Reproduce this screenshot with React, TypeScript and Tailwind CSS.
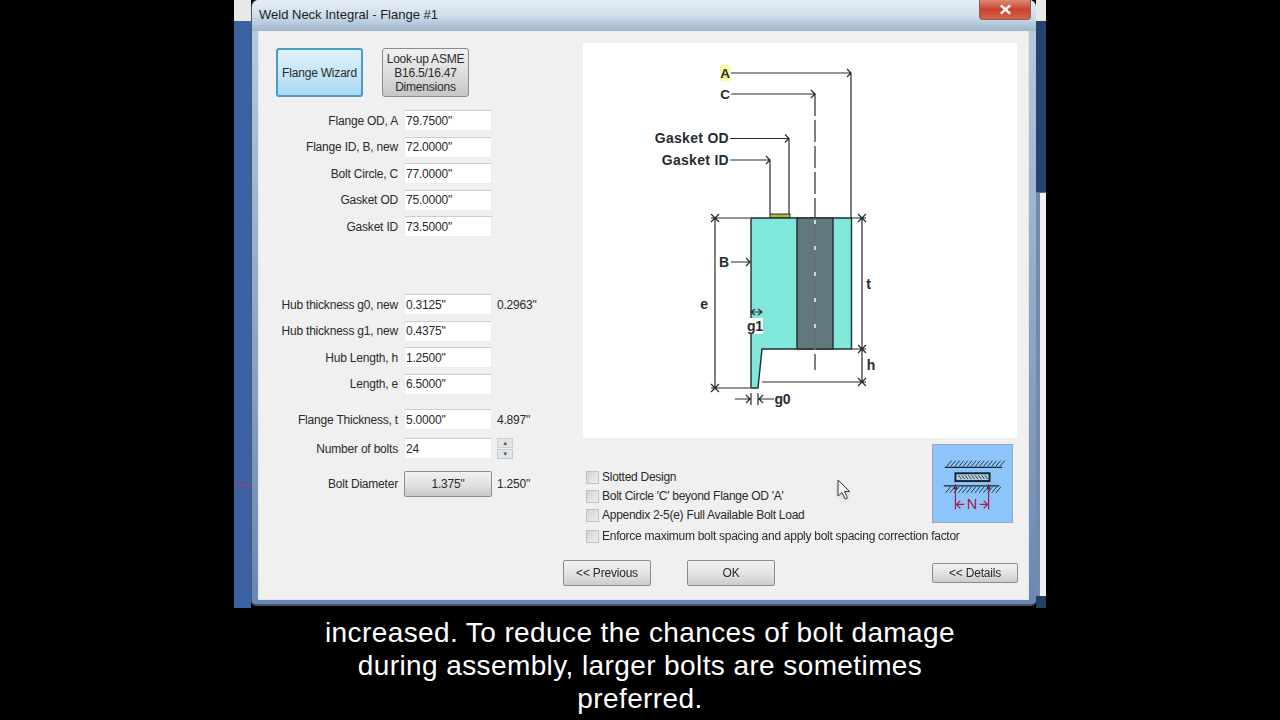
const topFields = [
  ['Flange OD, A', '79.7500"'],
  ['Flange ID, B, new', '72.0000"'],
  ['Bolt Circle, C', '77.0000"'],
  ['Gasket OD', '75.0000"'],
  ['Gasket ID', '73.5000"'],
];

const hubFields = [
  ['Hub thickness g0, new', '0.3125"', '0.2963"'],
  ['Hub thickness g1, new', '0.4375"', ''],
  ['Hub Length, h', '1.2500"', ''],
  ['Length, e', '6.5000"', ''],
];

const checks = ['Slotted Design', "Bolt Circle 'C' beyond Flange OD 'A'", 'Appendix 2-5(e) Full Available Bolt Load'];

function Field({ label, value, extra }: { label: string; value: string; extra?: string }) {
  return (
    <div className="flex h-[26.4px] items-center">
      <span className="w-[140px] text-right">{label}</span>
      <span className="ml-[6px] flex h-[21px] w-[88px] items-center border border-[#ececec] border-t-[#cdcdcd] bg-white pl-[1px]">{value}</span>
      {extra && <span className="ml-[5px]">{extra}</span>}
    </div>
  );
}

function Check({ label }: { label: string }) {
  return (
    <div className="flex h-[19px] items-center gap-[3px] tracking-[-0.27px]">
      <span className="h-[13px] w-[13px] border border-[#c2c2c2] bg-gradient-to-br from-[#d2d2d2] to-[#efefef]" />
      <span>{label}</span>
    </div>
  );
}

function Diagram() {
  const line = '#262c30';
  return (
    <svg viewBox="583 43 434 395" className="h-[395px] w-[434px] bg-white">
      {/* gasket + flange body */}
      <rect x="770" y="214" width="20" height="4" fill="#b4b43c" stroke={line} strokeWidth="1" />
      <path d="M751 218H851.5V349H762L758 388H751Z" fill="#80e8da" stroke={line} strokeWidth="1.4" />
      <rect x="797" y="218" width="36" height="131" fill="#62787f" stroke={line} strokeWidth="1.4" />
      <path d="M815 218V352" stroke="white" strokeWidth="1.4" />

      {/* leaders */}
      <g fill="none" stroke={line} strokeWidth="1.2">
        <path d="M731 73H851V218M847 69L851 73L847 77" />
        <path d="M731 94H815M811 90L815 94L811 98" />
        <path d="M730 138.500H789V214M785 134.500L789 138.500L785 142.500" />
        <path d="M730 160H770V214M766 156L770 160L766 164" />
        <path d="M815 94V370" strokeDasharray="22 4" />
        {/* e */}
        <path d="M750 218H711M715 218V388M711 388H750M711 214L719 222M719 214L711 222M711 384L719 392M719 384L711 392" />
        {/* t, h */}
        <path d="M852 218H866M862 218V382M852 349H866M762 382H866M858 214L866 222M866 214L858 222M858 345L866 353M866 345L858 353M858 378L866 386M866 378L858 386" />
        {/* B */}
        <path d="M731 262H750M746 258L750 262L746 266" />
        {/* g1 */}
        <path d="M751 312H762M755 309L751 312L755 315M758 309L762 312L758 315" />
        {/* g0 */}
        <path d="M735 399H750M746 395L750 399L746 403M751 393V405M758 393V405M759 399H774M763 395L759 399L763 403" />
      </g>

      <rect x="720" y="65" width="10.500" height="16" fill="#fafa9e" />
      <rect x="747" y="318" width="16" height="16" fill="white" />
      <g fontFamily='"Liberation Sans", Arial, sans-serif' fontWeight="700" fontSize="14" fill="#262c30">
        <text x="725" y="78" textAnchor="middle" fontSize="13.500">A</text>
        <text x="725" y="99" textAnchor="middle" fontSize="13.500">C</text>
        <text x="729" y="143" textAnchor="end" letterSpacing=".3">Gasket OD</text>
        <text x="729" y="165" textAnchor="end" letterSpacing=".3">Gasket ID</text>
        <text x="724" y="266.500" textAnchor="middle">B</text>
        <text x="704" y="309" textAnchor="middle">e</text>
        <text x="868.500" y="289" textAnchor="middle">t</text>
        <text x="871" y="370" textAnchor="middle">h</text>
        <text x="755" y="331" textAnchor="middle">g1</text>
        <text x="782.500" y="404" textAnchor="middle">g0</text>
      </g>
    </svg>
  );
}

function BoltThumb() {
  const top = Array.from({ length: 14 }, (_, i) => 946 + i * 4.2);
  const mid = Array.from({ length: 9 }, (_, i) => 958 + i * 3.4);
  const low = Array.from({ length: 13 }, (_, i) => 945 + i * 4.3);
  return (
    <svg viewBox="932 444 81 79" className="h-[79px] w-[81px] border border-[#9aa7b4] bg-[#8dc5fb]">
      <g stroke="#14242e" fill="none">
        <path d="M944 467H1003" strokeWidth="1.2" />
        {top.map(x => <path key={x} d={`M${x} 466L${x + 5} 460`} strokeWidth=".9" />)}
        <rect x="955" y="473" width="35" height="8" fill="#b9cfe0" strokeWidth="2" />
        {mid.map(x => <path key={x} d={`M${x} 475L${x + 3} 479`} strokeWidth=".9" />)}
        <path d="M943 486H1000" strokeWidth="1.2" />
        {low.map(x => <path key={x} d={`M${x + 5} 487L${x} 493`} strokeWidth=".9" />)}
      </g>
      <circle cx="955" cy="488" r="1.600" fill="#14242e" />
      <circle cx="989" cy="488" r="1.600" fill="#14242e" />
      <g stroke="#a8164a" fill="none" strokeWidth="1.2">
        <path d="M955 484V510M989 484V510" />
        <path d="M956 505H964M960 501L956 505L960 509M980 505H988M984 501L988 505L984 509" />
      </g>
      <text x="972" y="510" textAnchor="middle" fontSize="15" fill="#a8164a" fontFamily='"Liberation Sans", Arial, sans-serif'>N</text>
    </svg>
  );
}

export default function App() {
  return (
    <div className="h-screen w-screen overflow-hidden bg-black font-['Liberation_Sans',Arial,sans-serif]">
      <div className="relative mx-auto flex h-[608px] w-[812px] text-[12px] leading-none tracking-[-0.2px] text-[#2a2a2a] blur-[0.4px]">
        {/* desktop behind the dialog, left */}
        <div className="flex w-[17px] flex-col">
          <div className="h-[21px] bg-[#e8e8e6]" />
          <div className="flex-1 bg-[#3b63a3]" />
        </div>
        <div className="absolute left-[2px] top-[484px] h-[2px] w-[14px] bg-[#8a4a78]" />

        {/* dialog */}
        <div className="flex h-[606px] w-[785px] flex-col rounded-t-[7px] rounded-b-[5px] border-b-2 border-l border-[#47566e] bg-gradient-to-b from-[#bccddd] via-[#93a9c4] to-[#6a88b0]">
          <div className="flex h-[31px] items-start justify-between rounded-t-[7px] bg-gradient-to-b from-[#e4edf5] via-[#cfdfec] to-[#9fb6cc] pl-[7px] pr-[5px]">
            <span className="pt-[8px] text-[13px] tracking-[0px] text-[#1c1c1c]">Weld Neck Integral - Flange #1</span>
            <span className="flex h-[20px] w-[52px] items-center justify-center rounded-b-[4px] border border-t-0 border-[#8d5a58] bg-gradient-to-b from-[#d98a78] via-[#c9402a] to-[#d2644e]">
              <svg viewBox="0 0 14 12" className="h-[11px] w-[13px]"><path d="M2 1.500L12 10.500M12 1.500L2 10.500" stroke="white" strokeWidth="2.800" /></svg>
            </span>
          </div>

          <div className="ml-[6px] mr-[7px] flex flex-1 flex-col border-x border-b border-[#dfe6ee] bg-[#f0f0f0]">
            <div className="flex h-[529px]">
              {/* form */}
              <div className="-ml-[1px] flex w-[325px] flex-col pt-[17px]">
                <div className="flex h-[49px] gap-[19px] pl-[18px]">
                  <button className="h-[49px] w-[87px] rounded-[3px] border-2 border-[#4b9bc4] bg-gradient-to-b from-[#e2f3fc] to-[#a9daf3]">Flange Wizard</button>
                  <button className="h-[49px] w-[87px] rounded-[3px] border border-[#8c8c8c] bg-gradient-to-b from-[#f1f1f1] via-[#dedede] to-[#c6c6c6] leading-[14px]">Look-up ASME<br />B16.5/16.47<br />Dimensions</button>
                </div>
                <div className="mt-[10.800px]">
                  {topFields.map(([l, v]) => <Field key={l} label={l} value={v} />)}
                </div>
                <div className="mt-[52px]">
                  {hubFields.map(([l, v, e]) => <Field key={l} label={l} value={v} extra={e} />)}
                </div>
                <div className="mt-[9.400px]">
                  <Field label="Flange Thickness, t" value={'5.0000"'} extra={'4.897"'} />
                </div>
                <div className="mt-[2.800px] flex h-[26px] items-center">
                  <span className="w-[140px] text-right">Number of bolts</span>
                  <span className="ml-[6px] flex h-[21px] w-[88px] items-center border border-[#ececec] border-t-[#cdcdcd] bg-white pl-[1px]">24</span>
                  <div className="ml-[5px] flex w-[16px] flex-col gap-[1px]">
                    <span className="flex h-[10px] items-center justify-center border border-[#d0d0d0] bg-[#e4e4e4] text-[6px] text-[#555]">▲</span>
                    <span className="flex h-[10px] items-center justify-center border border-[#c4cdd6] bg-[#dfe5ea] text-[6px] text-[#555]">▼</span>
                  </div>
                </div>
                <div className="mt-[9px] flex h-[26px] items-center">
                  <span className="w-[140px] text-right">Bolt Diameter</span>
                  <button className="ml-[6px] h-[26px] w-[88px] rounded-[2px] border border-[#8c8c8c] bg-gradient-to-b from-[#f2f2f2] via-[#e2e2e2] to-[#c9c9c9]">1.375"</button>
                  <span className="ml-[5px]">1.250"</span>
                </div>
              </div>

              {/* drawing + options */}
              <div className="flex w-[434px] flex-col pt-[12px]">
                <Diagram />
                <div className="mt-[6px] flex h-[82.500px] items-start justify-between pl-[3px] pr-[4px]">
                  <div className="flex flex-col pt-[23.500px]">
                    {checks.map(c => <Check key={c} label={c} />)}
                  </div>
                  <BoltThumb />
                </div>
                <div className="pl-[3px]">
                  <Check label="Enforce maximum bolt spacing and apply bolt spacing correction factor" />
                </div>
              </div>
            </div>

            <div className="flex items-start pl-[304px]">
              <button className="h-[26px] w-[88px] rounded-[2px] border border-[#8c8c8c] bg-gradient-to-b from-[#f2f2f2] via-[#e4e4e4] to-[#cccccc]">&lt;&lt; Previous</button>
              <button className="ml-[36px] h-[26px] w-[88px] rounded-[2px] border border-[#8c8c8c] bg-gradient-to-b from-[#f2f2f2] via-[#e4e4e4] to-[#cccccc]">OK</button>
              <button className="ml-[157px] mt-[3px] h-[20px] w-[86px] rounded-[2px] border border-[#8c8c8c] bg-gradient-to-b from-[#f2f2f2] via-[#e4e4e4] to-[#cccccc]">&lt;&lt; Details</button>
            </div>
          </div>
          <div className="h-[4px]" />
        </div>

        {/* desktop behind the dialog, right */}
        <div className="flex w-[10px] flex-col">
          <div className="h-[21px] bg-[#e8e8e6]" />
          <div className="h-[171px] bg-[#25436f]" />
          <div className="flex flex-1 border-t border-[#5a6f90]">
            <div className="w-[4px] bg-[#7489ab]" />
            <div className="flex-1 bg-[#eef0f2]" />
          </div>
          <div className="h-[12px] bg-[#25405f]" />
        </div>

        {/* mouse pointer */}
        <svg viewBox="0 0 16 22" className="absolute left-[602px] top-[479px] h-[22px] w-[16px] drop-shadow-sm">
          <path d="M2 1V17L6 13.500L9 20L11.500 19L8.500 12.500H13.500Z" fill="#f4f4f4" stroke="#3a3a3a" strokeWidth="1" />
        </svg>
      </div>

      <div className="flex flex-col items-center pt-[8px] text-[28px] leading-[33px] tracking-[0.4px] text-white">
        <span>increased. To reduce the chances of bolt damage</span>
        <span>during assembly, larger bolts are sometimes</span>
        <span>preferred.</span>
      </div>
    </div>
  );
}
